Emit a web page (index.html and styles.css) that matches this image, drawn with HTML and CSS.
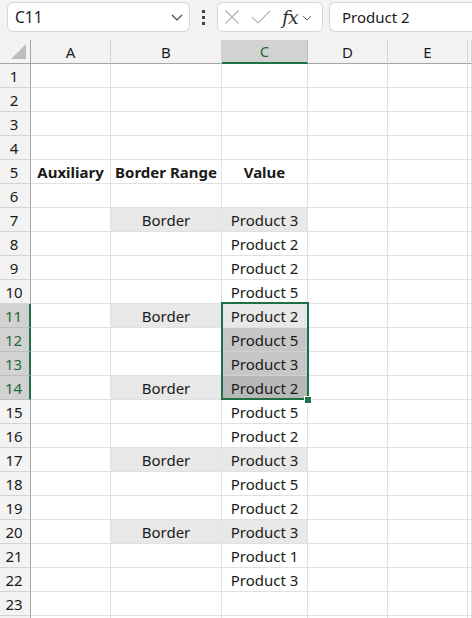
FILE: index.html
```html
<!DOCTYPE html>
<html>
<head>
<meta charset="utf-8">
<link rel="stylesheet" href="styles.css">
</head>
<body>
<div class="app">
  <div class="fbar">
    <div class="namebox">
      <span class="nb-text">C11</span>
      <svg class="chev" width="12" height="7" viewBox="0 0 12 7"><path d="M1 1 L6 6 L11 1" fill="none" stroke="#444" stroke-width="1.2"/></svg>
    </div>
    <div class="dots"><span></span><span></span><span></span></div>
    <div class="fbtns">
      <svg class="ico" width="16" height="14" viewBox="0 0 16 14"><path d="M1.5 0.5 L14.5 13.5 M14.5 0.5 L1.5 13.5" stroke="#b4b4b4" stroke-width="1.2" fill="none"/></svg>
      <svg class="ico" width="20" height="14" viewBox="0 0 20 14"><path d="M1 7 L7 13 L19 1" stroke="#b4b4b4" stroke-width="1.2" fill="none"/></svg>
      <span class="fx">fx</span>
      <svg class="chev2" width="10" height="6" viewBox="0 0 10 6"><path d="M1 1 L5 5 L9 1" fill="none" stroke="#666" stroke-width="1"/></svg>
    </div>
    <div class="finput">Product 2</div>
  </div>
  <div class="sheet">
    <div class="corner"><svg width="17" height="17" viewBox="0 0 17 17"><path d="M16 1 L16 16 L1 16 Z" fill="#bdbdbd"/></svg></div>
    <div class="ch">A</div><div class="ch">B</div><div class="ch sel">C</div><div class="ch">D</div><div class="ch">E</div><div class="ch last"></div>

    <div class="rh">1</div><div class="c"></div><div class="c"></div><div class="c"></div><div class="c"></div><div class="c"></div><div class="c"></div>
    <div class="rh">2</div><div class="c"></div><div class="c"></div><div class="c"></div><div class="c"></div><div class="c"></div><div class="c"></div>
    <div class="rh">3</div><div class="c"></div><div class="c"></div><div class="c"></div><div class="c"></div><div class="c"></div><div class="c"></div>
    <div class="rh">4</div><div class="c"></div><div class="c"></div><div class="c"></div><div class="c"></div><div class="c"></div><div class="c"></div>
    <div class="rh">5</div><div class="c b">Auxiliary</div><div class="c b">Border Range</div><div class="c b">Value</div><div class="c"></div><div class="c"></div><div class="c"></div>
    <div class="rh">6</div><div class="c"></div><div class="c"></div><div class="c"></div><div class="c"></div><div class="c"></div><div class="c"></div>
    <div class="rh">7</div><div class="c"></div><div class="c f">Border</div><div class="c f">Product 3</div><div class="c"></div><div class="c"></div><div class="c"></div>
    <div class="rh">8</div><div class="c"></div><div class="c"></div><div class="c">Product 2</div><div class="c"></div><div class="c"></div><div class="c"></div>
    <div class="rh">9</div><div class="c"></div><div class="c"></div><div class="c">Product 2</div><div class="c"></div><div class="c"></div><div class="c"></div>
    <div class="rh">10</div><div class="c"></div><div class="c"></div><div class="c">Product 5</div><div class="c"></div><div class="c"></div><div class="c"></div>
    <div class="rh rsel">11</div><div class="c"></div><div class="c f">Border</div><div class="c f">Product 2</div><div class="c"></div><div class="c"></div><div class="c"></div>
    <div class="rh rsel">12</div><div class="c"></div><div class="c"></div><div class="c s">Product 5</div><div class="c"></div><div class="c"></div><div class="c"></div>
    <div class="rh rsel">13</div><div class="c"></div><div class="c"></div><div class="c s">Product 3</div><div class="c"></div><div class="c"></div><div class="c"></div>
    <div class="rh rsel">14</div><div class="c"></div><div class="c f">Border</div><div class="c sf">Product 2</div><div class="c"></div><div class="c"></div><div class="c"></div>
    <div class="rh">15</div><div class="c"></div><div class="c"></div><div class="c">Product 5</div><div class="c"></div><div class="c"></div><div class="c"></div>
    <div class="rh">16</div><div class="c"></div><div class="c"></div><div class="c">Product 2</div><div class="c"></div><div class="c"></div><div class="c"></div>
    <div class="rh">17</div><div class="c"></div><div class="c f">Border</div><div class="c f">Product 3</div><div class="c"></div><div class="c"></div><div class="c"></div>
    <div class="rh">18</div><div class="c"></div><div class="c"></div><div class="c">Product 5</div><div class="c"></div><div class="c"></div><div class="c"></div>
    <div class="rh">19</div><div class="c"></div><div class="c"></div><div class="c">Product 2</div><div class="c"></div><div class="c"></div><div class="c"></div>
    <div class="rh">20</div><div class="c"></div><div class="c f">Border</div><div class="c f">Product 3</div><div class="c"></div><div class="c"></div><div class="c"></div>
    <div class="rh">21</div><div class="c"></div><div class="c"></div><div class="c">Product 1</div><div class="c"></div><div class="c"></div><div class="c"></div>
    <div class="rh">22</div><div class="c"></div><div class="c"></div><div class="c">Product 3</div><div class="c"></div><div class="c"></div><div class="c"></div>
    <div class="rh">23</div><div class="c"></div><div class="c"></div><div class="c"></div><div class="c"></div><div class="c"></div><div class="c"></div>
    <div class="rh"></div><div class="c"></div><div class="c"></div><div class="c"></div><div class="c"></div><div class="c"></div><div class="c"></div>

    <div class="selbox"></div>
    <div class="handle"></div>
  </div>
</div>
</body>
</html>
```
FILE: styles.css
```css
* { box-sizing: border-box; }
html, body { margin: 0; padding: 0; background: #fff; overflow: hidden; }
body { font-family: "Noto Sans", "Liberation Sans", sans-serif; color: #1a1a1a; }
.app { width: 472px; height: 618px; overflow: hidden; }

.fbar {
  height: 40px;
  background: #f3f3f3;
  display: flex;
  align-items: flex-start;
  padding: 2px 0 0 7px;
}
.namebox {
  width: 183px; height: 30px;
  background: #fff;
  border: 1px solid #d6d6d6;
  border-radius: 6px;
  display: flex; align-items: center; justify-content: space-between;
  padding: 0 6px 0 7px;
}
.nb-text { font-size: 15.5px; color: #1a1a1a; }
.dots {
  width: 27px; height: 30px;
  display: flex; flex-direction: column; align-items: center; justify-content: center; gap: 3px;
}
.dots span { width: 3px; height: 3px; background: #444; display: block; }
.fbtns {
  width: 106px; height: 30px;
  background: #fff;
  border: 1px solid #d6d6d6;
  border-radius: 6px;
  display: flex; align-items: center;
  padding: 0 0 0 6px;
}
.fbtns .ico:first-child { margin-right: 11px; }
.fx {
  font-family: "DejaVu Serif", "Liberation Serif", serif;
  font-style: italic; font-size: 19px; color: #333;
  margin-left: 11px; margin-right: 4px; line-height: 1;
  letter-spacing: -1px;
}
.chev2 { margin-top: 2px; }
.finput {
  margin-left: 6px;
  flex: 1; height: 30px;
  background: #fff;
  border: 1px solid #d6d6d6;
  border-right: none;
  border-radius: 6px 0 0 6px;
  font-size: 15px;
  display: flex; align-items: center;
  padding-left: 12px;
}

.sheet {
  position: relative;
  display: grid;
  grid-template-columns: 31px 80px 111px 86px 80px 80px 1fr;
  grid-auto-rows: 24px;
  font-size: 15px;
}
.corner {
  background: #f3f3f3;
  border-right: 1px solid #a6a6a6;
  border-bottom: 1px solid #a6a6a6;
  display: flex; align-items: flex-end; justify-content: flex-end;
  padding: 0 3px 3px 0;
}
.ch {
  background: #f3f3f3;
  border-right: 1px solid #d4d4d4;
  border-bottom: 1px solid #a6a6a6;
  display: flex; align-items: center; justify-content: center;
  color: #1a1a1a;
}
.ch.sel {
  background: #d2d2d2;
  color: #1c6b3c;
  border-bottom: 2px solid #1e7145;
  border-right-color: #bdbdbd;
}
.rh {
  background: #f3f3f3;
  border-right: 1px solid #a6a6a6;
  border-bottom: 1px solid #d4d4d4;
  display: flex; align-items: center; justify-content: center;
  padding-right: 2px;
}
.rh.rsel {
  background: #d2d2d2;
  color: #1c6b3c;
  border-right: 2px solid #1e7145;
  border-bottom-color: #bdbdbd;
}
.c {
  border-right: 1px solid #e1e1e1;
  border-bottom: 1px solid #e1e1e1;
  display: flex; align-items: center; justify-content: center;
  white-space: nowrap;
}
.c.b { font-weight: bold; }
.c.f { background: #e8e8e8; }
.c.s { background: #c6c6c6; border-bottom-color: #d0d0d0; }
.c.sf { background: #b8b8b8; }

.selbox {
  position: absolute;
  left: 221px; top: 262px;
  width: 88px; height: 98px;
  border: 2px solid #1e7145;
  pointer-events: none;
}
.handle {
  position: absolute;
  left: 304px; top: 356px;
  width: 8px; height: 8px;
  background: #1e7145;
  border: 1px solid #fff;
}
```
